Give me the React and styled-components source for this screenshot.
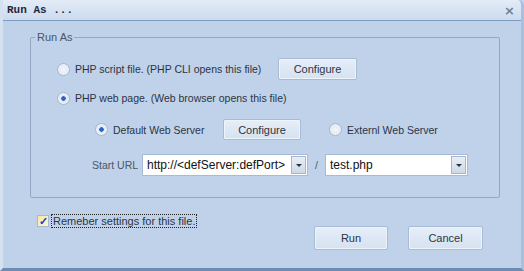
import React from 'react'
import styled, { createGlobalStyle } from 'styled-components'

const Global = createGlobalStyle`
  html, body { margin: 0; padding: 0; background: #bfd3e9; }
  body { font-family: "Liberation Sans", Arial, sans-serif; font-size: 10.5px; color: #2b3445; }
`

const Window = styled.div`
  width: 524px;
  height: 271px;
  box-sizing: border-box;
  background: #bfd2e9;
  border-left: 3px solid #d3e1f1;
  border-right: 3px solid #a9c0dc;
  border-bottom: 3px solid #6d8cb3;
  border-top-right-radius: 6px;
  display: flex;
  flex-direction: column;
  overflow: hidden;
`

const TitleBar = styled.div`
  height: 20px;
  flex: none;
  display: flex;
  align-items: center;
  justify-content: space-between;
  padding: 0 6px 0 4px;
  background: linear-gradient(#e3ecf7, #cbdbee);
  border-bottom: 1px solid #7f9dc2;
`

const Title = styled.span`
  font-family: "Liberation Mono", "Courier New", monospace;
  font-weight: bold;
  font-size: 11px;
  color: #1f2a3c;
`

const Close = styled.span`
  font-family: "DejaVu Sans", sans-serif;
  font-size: 13px;
  font-weight: bold;
  color: #6f7f98;
`

const Body = styled.div`
  flex: 1;
  padding: 10px 21px 0 27px;
  display: flex;
  flex-direction: column;
`

const Group = styled.fieldset`
  margin: 0;
  padding: 15px 0 0 0;
  height: 167px;
  box-sizing: border-box;
  border: 1px solid #92a8c6;
  border-radius: 2px;
  display: flex;
  flex-direction: column;
`

const Legend = styled.legend`
  padding: 0 2px;
  margin-left: 4px;
  font-size: 11px;
  color: #4c5666;
`

const Row = styled.div`
  display: flex;
  align-items: center;
  height: ${p => p.h || 22}px;
  margin-top: ${p => p.mt || 0}px;
  padding-left: ${p => p.indent || 0}px;
`

const RadioLabel = styled.label`
  display: flex;
  align-items: center;
  gap: 5px;
  flex: none;
  width: ${p => (p.w ? p.w + 'px' : 'auto')};
  margin-left: ${p => p.ml || 0}px;
`

const RadioDot = styled.span`
  width: 11px;
  height: 11px;
  flex: none;
  border-radius: 50%;
  border: 1px solid #a9b8cc;
  background: radial-gradient(circle, ${p => (p.on ? '#2c63c9 0, #2c63c9 2px, #dfe8f5 2.5px' : '#f3f6fa 0')}, #e6edf6 4px, #c7d3e3 6px);
  box-shadow: inset 0 0 0 1px #eef3f9;
`

const Button = styled.button`
  width: ${p => p.w || 80}px;
  height: ${p => p.h || 22}px;
  flex: none;
  font: inherit;
  font-size: 11px;
  color: #2b3445;
  border: 1px solid #a7bbd6;
  border-radius: 2px;
  background: linear-gradient(#e6eef8, #d5e2f1);
  box-shadow: inset 0 0 0 1px #eef4fb;
  padding: 0;
`

const UrlLabel = styled.span`
  width: 50px;
  color: #4c5666;
`

const Combo = styled.div`
  width: ${p => p.w}px;
  height: 22px;
  box-sizing: border-box;
  border: 1px solid #a7bbd6;
  background: #fff;
  display: flex;
  align-items: center;
  padding: 1px 1px 1px 4px;
  font-size: 12px;
  color: #111;
`

const ComboText = styled.span`
  flex: 1;
`

const DropButton = styled.span`
  width: 15px;
  height: 18px;
  box-sizing: border-box;
  border: 1px solid #a3b6cf;
  background: linear-gradient(#e8eef6, #cdd9e8);
  display: flex;
  align-items: center;
  justify-content: center;
  &::after {
    content: '';
    border-left: 3px solid transparent;
    border-right: 3px solid transparent;
    border-top: 3px solid #2a3445;
  }
`

const Slash = styled.span`
  width: 17px;
  text-align: center;
  color: #4c5666;
`

const CheckRow = styled.div`
  display: flex;
  align-items: center;
  gap: 3px;
  margin: 17px 0 0 7px;
`

const CheckBox = styled.span`
  width: 10px;
  height: 10px;
  border: 1px solid #a9b8cc;
  background: linear-gradient(135deg, #f7e8a8, #fdf6d8);
  display: flex;
  align-items: center;
  justify-content: center;
  font-size: 11px;
  font-weight: bold;
  color: #1d44b5;
  line-height: 1;
`

const FocusLabel = styled.span`
  outline: 1px dotted #222;
  padding: 0 1px;
  font-size: 11px;
`

const Footer = styled.div`
  display: flex;
  justify-content: flex-end;
  gap: 20px;
  margin-top: -1px;
  padding-right: 17px;
`

export default function App() {
  return (
    <Window>
      <Global />
      <TitleBar>
        <Title>Run As ...</Title>
        <Close>×</Close>
      </TitleBar>
      <Body>
        <Group>
          <Legend>Run As</Legend>
          <Row indent={26}>
            <RadioLabel w={221}><RadioDot />PHP script file. (PHP CLI opens this file)</RadioLabel>
            <Button w={79}>Configure</Button>
          </Row>
          <Row indent={26} mt={7}>
            <RadioLabel><RadioDot on />PHP web page. (Web browser opens this file)</RadioLabel>
          </Row>
          <Row indent={64} mt={10} h={21}>
            <RadioLabel w={128}><RadioDot on />Default Web Server</RadioLabel>
            <Button w={78} h={21}>Configure</Button>
            <RadioLabel ml={28}><RadioDot />Externl Web Server</RadioLabel>
          </Row>
          <Row indent={61} mt={14}>
            <UrlLabel>Start URL</UrlLabel>
            <Combo w={166}><ComboText>http://&lt;defServer:defPort&gt;</ComboText><DropButton /></Combo>
            <Slash>/</Slash>
            <Combo w={143}><ComboText>test.php</ComboText><DropButton /></Combo>
          </Row>
        </Group>
        <CheckRow>
          <CheckBox>✓</CheckBox>
          <FocusLabel>Remeber settings for this file.</FocusLabel>
        </CheckRow>
        <Footer>
          <Button w={74} h={24}>Run</Button>
          <Button w={75} h={24}>Cancel</Button>
        </Footer>
      </Body>
    </Window>
  )
}
